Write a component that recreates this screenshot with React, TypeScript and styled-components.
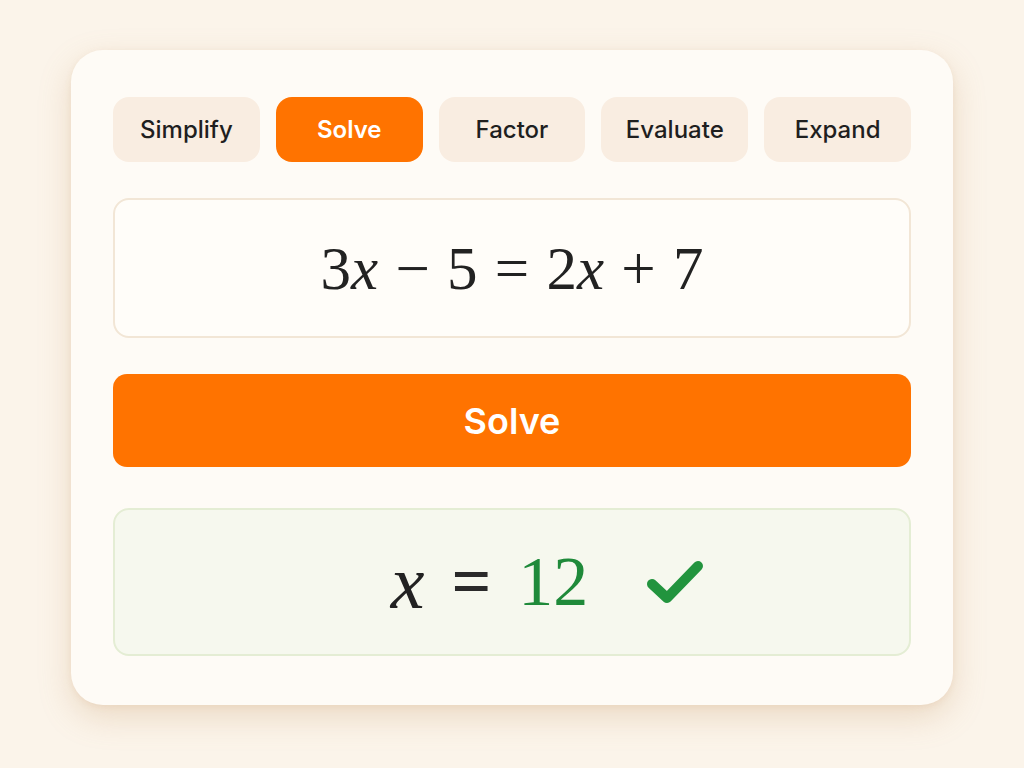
import { useState } from 'react';
import styled, { createGlobalStyle } from 'styled-components';

const GlobalStyle = createGlobalStyle`
  html, body {
    margin: 0;
    padding: 0;
    background: #fbf4ea;
  }
  body {
    font-family: Inter, "Noto Sans", sans-serif;
  }
`;

const Page = styled.div`
  width: 1024px;
  height: 768px;
  box-sizing: border-box;
  padding: 50px 71px 63px;
  display: flex;
`;

const Card = styled.div`
  flex: 1;
  display: flex;
  flex-direction: column;
  padding: 47px 42px 49px;
  background: #fefbf6;
  border-radius: 32px;
  box-shadow: 0 12px 32px rgba(196, 150, 100, 0.28), 0 2px 6px rgba(196, 150, 100, 0.12);
`;

const Tabs = styled.div`
  display: grid;
  grid-template-columns: repeat(5, 1fr);
  gap: 16px;
`;

const Tab = styled.button<{ $active: boolean }>`
  height: 65px;
  border: none;
  border-radius: 16px;
  font-family: Inter, "Noto Sans", sans-serif;
  font-size: 24px;
  font-weight: ${(p) => (p.$active ? 600 : 500)};
  color: ${(p) => (p.$active ? '#ffffff' : '#1f1f1f')};
  background: ${(p) => (p.$active ? '#ff7300' : '#f9ede1')};
  cursor: pointer;
`;

const InputBox = styled.div`
  margin-top: 36px;
  height: 140px;
  box-sizing: border-box;
  border: 2px solid #f2e6d6;
  border-radius: 16px;
  background: #fffdf9;
  display: flex;
  align-items: center;
  justify-content: center;
`;

const Equation = styled.div`
  font-family: "Liberation Serif", "DejaVu Serif", serif;
  font-size: 61px;
  color: #222222;
  word-spacing: 2px;
  margin-top: 2px;
`;

const Var = styled.i<{ $big?: boolean }>`
  font-style: italic;
  ${(p) => (p.$big ? 'font-size: 76px;' : '')}
`;

const Equals = styled.span`
  font-weight: 700;
  color: #2a2a2a;
`;

const SolveButton = styled.button`
  margin-top: 36px;
  height: 93px;
  border: none;
  border-radius: 14px;
  background: #ff7300;
  color: #ffffff;
  font-family: Inter, "Noto Sans", sans-serif;
  font-size: 36px;
  font-weight: 600;
  cursor: pointer;
`;

const ResultBox = styled.div`
  margin-top: 41px;
  height: 148px;
  box-sizing: border-box;
  border: 2px solid #e4edd4;
  border-radius: 16px;
  background: #f6f8ee;
  display: flex;
  align-items: center;
  justify-content: center;
  gap: 27px;
  padding-left: 72px;
  font-family: "Liberation Serif", "DejaVu Serif", serif;
  font-size: 70px;
  color: #222222;
`;

const Answer = styled.span`
  color: #1f8a3a;
`;

const Check = styled.svg`
  margin-left: 30px;
  width: 60px;
  height: 48px;
`;

const modes = ['Simplify', 'Solve', 'Factor', 'Evaluate', 'Expand'];

const App = () => {
  const [mode, setMode] = useState<string>('Solve');

  return (
    <Page>
      <GlobalStyle />
      <Card>
        <Tabs>
          {modes.map((m) => (
            <Tab key={m} $active={m === mode} onClick={() => setMode(m)}>
              {m}
            </Tab>
          ))}
        </Tabs>
        <InputBox>
          <Equation>
            3<Var>x</Var> − 5 = 2<Var>x</Var> + 7
          </Equation>
        </InputBox>
        <SolveButton>Solve</SolveButton>
        <ResultBox>
          <Var $big>x</Var>
          <Equals>=</Equals>
          <Answer>12</Answer>
          <Check viewBox="0 0 60 48">
            <polyline
              points="7,26 22,40 53,8"
              fill="none"
              stroke="#22943e"
              strokeWidth="10"
              strokeLinecap="round"
              strokeLinejoin="round"
            />
          </Check>
        </ResultBox>
      </Card>
    </Page>
  );
};

export default App;
